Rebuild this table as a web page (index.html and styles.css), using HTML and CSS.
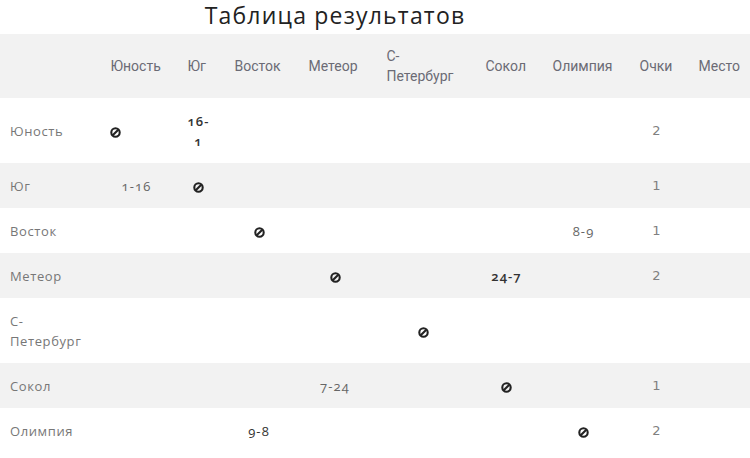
FILE: index.html
```html
<!DOCTYPE html>
<html lang="ru">
<head>
<meta charset="utf-8">
<title>Таблица результатов</title>
<link rel="stylesheet" href="styles.css">
</head>
<body>
<h1 class="title">Таблица результатов</h1>
<table class="results">
  <colgroup>
    <col class="c-team"><col class="c-1"><col class="c-2"><col class="c-3"><col class="c-4"><col class="c-5"><col class="c-6"><col class="c-7"><col class="c-pts"><col class="c-place">
  </colgroup>
  <thead>
    <tr>
      <th></th>
      <th>Юность</th>
      <th>Юг</th>
      <th>Восток</th>
      <th>Метеор</th>
      <th>С-<br>Петербург</th>
      <th>Сокол</th>
      <th>Олимпия</th>
      <th>Очки</th>
      <th>Место</th>
    </tr>
  </thead>
  <tbody>
    <tr>
      <td class="team">Юность</td>
      <td class="left"><svg class="ban" viewBox="0 0 11 11"><circle cx="5.5" cy="5.5" r="4.2"/><line x1="2.7" y1="8.3" x2="8.3" y2="2.7"/></svg></td>
      <td class="score win">16-<br>1</td>
      <td></td><td></td><td></td><td></td><td></td>
      <td class="pts">2</td>
      <td></td>
    </tr>
    <tr>
      <td class="team">Юг</td>
      <td class="score">1-16</td>
      <td><svg class="ban" viewBox="0 0 11 11"><circle cx="5.5" cy="5.5" r="4.2"/><line x1="2.7" y1="8.3" x2="8.3" y2="2.7"/></svg></td>
      <td></td><td></td><td></td><td></td><td></td>
      <td class="pts">1</td>
      <td></td>
    </tr>
    <tr>
      <td class="team">Восток</td>
      <td></td><td></td>
      <td><svg class="ban" viewBox="0 0 11 11"><circle cx="5.5" cy="5.5" r="4.2"/><line x1="2.7" y1="8.3" x2="8.3" y2="2.7"/></svg></td>
      <td></td><td></td><td></td>
      <td class="score">8-9</td>
      <td class="pts">1</td>
      <td></td>
    </tr>
    <tr>
      <td class="team">Метеор</td>
      <td></td><td></td><td></td>
      <td><svg class="ban" viewBox="0 0 11 11"><circle cx="5.5" cy="5.5" r="4.2"/><line x1="2.7" y1="8.3" x2="8.3" y2="2.7"/></svg></td>
      <td></td>
      <td class="score win">24-7</td>
      <td></td>
      <td class="pts">2</td>
      <td></td>
    </tr>
    <tr>
      <td class="team">С-<br>Петербург</td>
      <td></td><td></td><td></td><td></td>
      <td><svg class="ban" viewBox="0 0 11 11"><circle cx="5.5" cy="5.5" r="4.2"/><line x1="2.7" y1="8.3" x2="8.3" y2="2.7"/></svg></td>
      <td></td><td></td><td></td><td></td>
    </tr>
    <tr>
      <td class="team">Сокол</td>
      <td></td><td></td><td></td>
      <td class="score">7-24</td>
      <td></td>
      <td><svg class="ban" viewBox="0 0 11 11"><circle cx="5.5" cy="5.5" r="4.2"/><line x1="2.7" y1="8.3" x2="8.3" y2="2.7"/></svg></td>
      <td></td>
      <td class="pts">1</td>
      <td></td>
    </tr>
    <tr>
      <td class="team">Олимпия</td>
      <td></td><td></td>
      <td class="score dark">9-8</td>
      <td></td><td></td><td></td>
      <td><svg class="ban" viewBox="0 0 11 11"><circle cx="5.5" cy="5.5" r="4.2"/><line x1="2.7" y1="8.3" x2="8.3" y2="2.7"/></svg></td>
      <td class="pts">2</td>
      <td></td>
    </tr>
  </tbody>
</table>
</body>
</html>
```
FILE: styles.css
```css
html, body {
  margin: 0;
  padding: 0;
  background: #fff;
}

body {
  font-family: "Open Sans", "Noto Sans", sans-serif;
  color: #666;
}

.title {
  margin: 0;
  height: 34px;
  padding: 0 80px 0 0;
  text-align: center;
  font-family: "Open Sans", sans-serif;
  font-weight: 400;
  font-size: 23px;
  line-height: 31px;
  letter-spacing: 1.2px;
  color: #222;
}

.results {
  width: 750px;
  border-collapse: collapse;
  table-layout: fixed;
}

.c-team { width: 98px; }
.c-1 { width: 77px; }
.c-2 { width: 47px; }
.c-3 { width: 74px; }
.c-4 { width: 78px; }
.c-5 { width: 99px; }
.c-6 { width: 67px; }
.c-7 { width: 87px; }
.c-pts { width: 59px; }
.c-place { width: 64px; }

.results thead tr {
  background: #f2f2f2;
}

.results th {
  padding: 12px 0 12px 12.5px;
  text-align: left;
  font-family: Roboto, sans-serif;
  font-weight: 400;
  font-size: 14px;
  line-height: 20px;
  color: #6b6b75;
  white-space: nowrap;
}

.results td {
  padding: 12.5px 12px;
  text-align: center;
  vertical-align: middle;
  font-size: 13px;
  line-height: 20px;
}

.results tbody tr:nth-child(even) {
  background: #f2f2f2;
}

.results td.team {
  padding-left: 10px;
  text-align: left;
  color: #777;
  letter-spacing: 0.6px;
}

.results td.left {
  text-align: left;
}

.score {
  font-variant-numeric: oldstyle-nums;
  letter-spacing: 1.1px;
  color: #666;
}

.score.win {
  font-weight: 600;
  color: #333;
}

.score.dark {
  color: #333;
}

.pts {
  font-family: "DejaVu Sans", sans-serif;
  font-size: 10.5px;
  color: #808080;
}

.ban {
  display: inline-block;
  width: 11px;
  height: 11px;
  vertical-align: middle;
  fill: none;
  stroke: #222;
  stroke-width: 2.1;
}
```
